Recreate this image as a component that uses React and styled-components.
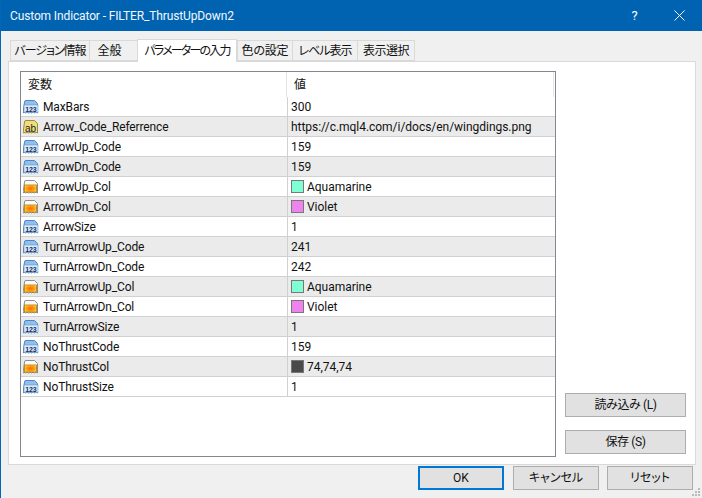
import React from 'react';
import styled, { createGlobalStyle } from 'styled-components';

const Global = createGlobalStyle`
  html, body { margin: 0; padding: 0; background: #f0f0f0; }
  * { box-sizing: border-box; }
`;

const Win = styled.div`
  width: 702px; height: 498px; display: flex; flex-direction: column; position: relative; overflow: hidden;
  background: #f0f0f0; border-left: 1px solid #0067b8;
  font: 12px/16px Roboto, "Noto Sans CJK JP", sans-serif; color: #111;
  font-feature-settings: "palt";
`;
const Title = styled.div`
  height: 31px; flex: none; background: #0063b1; color: #f4f8fb; display: flex; align-items: center;
  padding-left: 9px; font-size: 12px; letter-spacing: -0.13px;
`;
const TitleText = styled.span`flex: 1;`;
const CapBtn = styled.div`
  width: 45px; height: 31px; display: flex; align-items: center; justify-content: center; color: #fff; font-size: 13px;
`;
const Body = styled.div`
  flex: 1; display: flex; flex-direction: column; padding: 8px 6px 0 7px; min-height: 0;
`;
const Tabs = styled.div`
  display: flex; align-items: flex-end; height: 23px; padding-left: 3px; position: relative; z-index: 1; flex: none;
`;
const Tab = styled.div`
  height: ${p => (p.$active ? 23 : 21)}px;
  margin: ${p => (p.$active ? '0 1px 0 -1px' : '0 0 1px -1px')};
  width: ${p => p.$w}px;
  padding-right: ${p => p.$pr || 0}px;
  letter-spacing: ${p => p.$track || 0}px;
  display: flex; align-items: center; justify-content: center; white-space: nowrap;
  background: ${p => (p.$active ? '#fff' : '#f0f0f0')};
  border: 1px solid #d9d9d9;
  border-bottom: ${p => (p.$active ? 'none' : '1px solid #d9d9d9')};
  position: relative; z-index: ${p => (p.$active ? 2 : 0)};
`;
const Panel = styled.div`
  flex: none; height: 404px; margin-top: -1px; background: #fff; border: 1px solid #d9d9d9;
  padding: 9px 9px 7px 11px; display: flex; gap: 9px;
`;
const List = styled.div`
  width: 536px; height: 386px; border: 1px solid #828790; background: #fff; flex: none;
`;
const Head = styled.div`
  height: 25px; display: grid; grid-template-columns: 266px 1fr 1px; align-items: center;
`;
const HeadCell = styled.div`
  height: 100%; display: flex; align-items: center; padding-left: ${p => p.$pad}px; border-right: 1px solid #e5e5e5;
`;
const Row = styled.div`
  height: 20px; display: grid; grid-template-columns: 267px 1fr; background: ${p => (p.$alt ? '#ebebeb' : '#fff')};
  border-bottom: 1px solid #d0d0d0;
`;
const NameCell = styled.div`
  display: flex; align-items: center; padding-left: 2px; gap: 4px; border-right: 1px solid #d0d0d0; color: #111;
  letter-spacing: -0.13px;
`;
const ValueCell = styled.div`
  display: flex; align-items: center; padding-left: 3px; gap: 3px; letter-spacing: -0.03px;
`;
const Swatch = styled.span`
  width: 13px; height: 13px; border: 1px solid #777; background: ${p => p.$c}; flex: none;
`;
const Side = styled.div`
  flex: 1; display: flex; flex-direction: column; justify-content: flex-end; gap: 13px; padding-bottom: 3px;
`;
const Btn = styled.div`
  height: 24px; display: flex; align-items: center; justify-content: center; background: #e1e1e1; border: 1px solid #adadad;
  letter-spacing: -0.4px;
`;
const Footer = styled.div`
  display: flex; justify-content: flex-end; gap: 8px; padding: 1px 3px 0 0; height: 32px;
`;
const FootBtn = styled(Btn)`
  width: 86px;
  letter-spacing: 0;
  ${p => p.$primary && 'border: 2px solid #0078d7; margin-right: 1px;'}
`;
const Grip = styled.svg`
  position: absolute; right: 1px; bottom: 1px; width: 10px; height: 10px;
`;

const PAGE = 'M1.500 3Q1.500 1.500 3 1.500h8.500l3 3v9.500l-1.500-.8-1.500.8-1.500-.8-1.500.8-1.500-.8-1.500.8-1.500-.8-1.500.8-1.500-.8-1 .8z';

function IconNum() {
  return (
    <svg width="16" height="16" viewBox="0 0 16 16">
      <path d={PAGE} fill="#8fc0ee" stroke="#4f86c0" />
      <rect x="1" y="6" width="14" height="7.500" fill="#dcebf9" stroke="#4f86c0" strokeWidth="0.500" />
      <text x="8" y="12.500" textAnchor="middle" fontSize="7" fontWeight="700" fill="#0f2f66" fontFamily="Liberation Sans">123</text>
    </svg>
  );
}
function IconStr() {
  return (
    <svg width="16" height="16" viewBox="0 0 16 16">
      <path d={PAGE} fill="#efdd80" stroke="#a08b35" />
      <text x="7.500" y="12.500" textAnchor="middle" fontSize="10" fill="#1c1c1c" fontFamily="Liberation Sans">ab</text>
    </svg>
  );
}
function IconCol() {
  return (
    <svg width="16" height="16" viewBox="0 0 16 16">
      <defs>
        <radialGradient id="band" cx="0.5" cy="0.5" r="0.6">
          <stop offset="0" stopColor="#ff6a00" />
          <stop offset="0.55" stopColor="#ff9a10" />
          <stop offset="1" stopColor="#ffe040" />
        </radialGradient>
      </defs>
      <path d={PAGE} fill="#fafafa" stroke="#8c8c8c" />
      <rect x="1.500" y="6" width="12" height="7" fill="url(#band)" stroke="#b07a10" strokeWidth="0.800" />
    </svg>
  );
}

const icons = { n: IconNum, s: IconStr, c: IconCol };
const rows = [
  ['n', 'MaxBars', '300'],
  ['s', 'Arrow_Code_Referrence', 'https://c.mql4.com/i/docs/en/wingdings.png'],
  ['n', 'ArrowUp_Code', '159'],
  ['n', 'ArrowDn_Code', '159'],
  ['c', 'ArrowUp_Col', 'Aquamarine', '#7fffd4'],
  ['c', 'ArrowDn_Col', 'Violet', '#ee82ee'],
  ['n', 'ArrowSize', '1'],
  ['n', 'TurnArrowUp_Code', '241'],
  ['n', 'TurnArrowDn_Code', '242'],
  ['c', 'TurnArrowUp_Col', 'Aquamarine', '#7fffd4'],
  ['c', 'TurnArrowDn_Col', 'Violet', '#ee82ee'],
  ['n', 'TurnArrowSize', '1'],
  ['n', 'NoThrustCode', '159'],
  ['c', 'NoThrustCol', '74,74,74', '#4a4a4a'],
  ['n', 'NoThrustSize', '1'],
];
const tabs = [
  { t: 'バージョン情報', w: 80, track: -1 },
  { t: '全般', w: 49, pr: 8 },
  { t: 'パラメーターの入力', w: 100, active: true, track: -1.800 },
  { t: '色の設定', w: 56, track: -0.200 },
  { t: 'レベル表示', w: 66, track: -1 },
  { t: '表示選択', w: 58, track: -0.500 },
];

export default function App() {
  return (
    <Win>
      <Global />
      <Title>
        <TitleText>Custom Indicator - FILTER_ThrustUpDown2</TitleText>
        <CapBtn>?</CapBtn>
        <CapBtn>
          <svg width="11" height="11" viewBox="0 0 11 11"><path d="M.5.500l10 10M10.500.500l-10 10" stroke="#fff" fill="none" /></svg>
        </CapBtn>
      </Title>
      <Body>
        <Tabs>
          {tabs.map(x => <Tab key={x.t} $w={x.w} $active={x.active} $track={x.track} $pr={x.pr}>{x.t}</Tab>)}
        </Tabs>
        <Panel>
          <List>
            <Head>
              <HeadCell $pad={7}>変数</HeadCell>
              <HeadCell $pad={7}>値</HeadCell>
            </Head>
            {rows.map(([k, n, v, c], i) => {
              const I = icons[k];
              return (
                <Row key={n} $alt={i % 2 === 1}>
                  <NameCell><I />{n}</NameCell>
                  <ValueCell>{c && <Swatch $c={c} />}{v}</ValueCell>
                </Row>
              );
            })}
          </List>
          <Side>
            <Btn>読み込み (L)</Btn>
            <Btn>保存 (S)</Btn>
          </Side>
        </Panel>
        <Footer>
          <FootBtn $primary>OK</FootBtn>
          <FootBtn>キャンセル</FootBtn>
          <FootBtn>リセット</FootBtn>
        </Footer>
      </Body>
      <Grip viewBox="0 0 10 10">
        <g fill="#bbb"><rect x="7" y="1" width="2" height="2"/><rect x="4" y="4" width="2" height="2"/><rect x="7" y="4" width="2" height="2"/><rect x="1" y="7" width="2" height="2"/><rect x="4" y="7" width="2" height="2"/><rect x="7" y="7" width="2" height="2"/></g>
      </Grip>
    </Win>
  );
}
